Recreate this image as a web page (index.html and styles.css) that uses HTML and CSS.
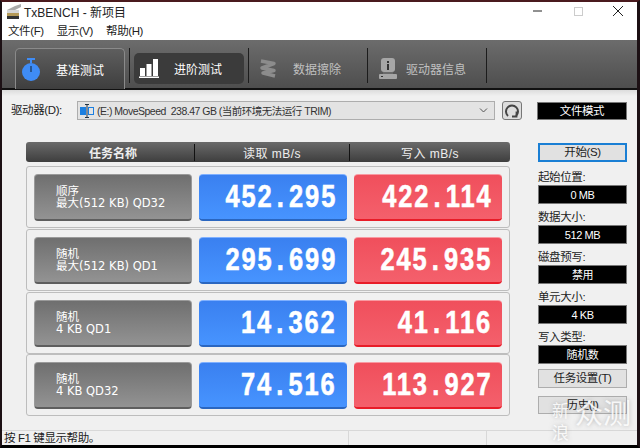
FILE: index.html
```html
<!doctype html>
<html lang="zh-CN">
<head>
    <meta charset="UTF-8">
    <title>TxBENCH</title>
    <link rel="stylesheet" href="styles.css">
</head>
<body>
<div class="window">
    <div class="titlebar">
        <svg class="app-icon" width="16" height="15" viewBox="0 0 16 15">
            <path d="M1 6 L9 2 L15 0 L15 3 L9 6 Z" fill="#aaa"/>
            <path d="M1 6 H13 V9 H1 Z" fill="#d6d6d6"/>
            <rect x="1" y="9" width="12" height="3" fill="#b59a58"/>
            <rect x="1" y="12" width="12" height="3" fill="#333"/>
        </svg>
        <span class="title">TxBENCH - 新项目</span>
        <div class="win-btns">
            <svg width="12" height="12" viewBox="0 0 12 12"><path d="M1 6H10" stroke="#222" stroke-width="1"/></svg>
            <svg width="12" height="12" viewBox="0 0 12 12"><rect x="2.5" y="2.5" width="8" height="8" fill="none" stroke="#ccc"/></svg>
            <svg width="12" height="12" viewBox="0 0 12 12"><path d="M1 1L11 11M11 1L1 11" stroke="#222" stroke-width="1"/></svg>
        </div>
    </div>
    <div class="menubar">
        <span>文件(F)</span><span>显示(V)</span><span>帮助(H)</span>
    </div>

    <div class="toolbar">
        <div class="tab tab-active">
            <svg width="18" height="23" viewBox="0 0 18 23">
                <rect x="5" y="0" width="8" height="2" fill="#3f8cf5"/>
                <rect x="8" y="2" width="2" height="3" fill="#3f8cf5"/>
                <circle cx="9" cy="14" r="9" fill="#3f8cf5"/>
                <path d="M9 8V14" stroke="#123" stroke-width="1"/>
            </svg>
            <span>基准测试</span>
        </div>
        <i class="sep"></i>
        <div class="tab tab-dark">
            <svg width="20" height="19" viewBox="0 0 20 19" fill="#fff">
                <rect x="1" y="9" width="5" height="8"/><rect x="7.500" y="5" width="5" height="12"/><rect x="14" y="0" width="5" height="17"/><rect y="17.500" width="20" height="1.500"/>
            </svg>
            <span>进阶测试</span>
        </div>
        <i class="sep"></i>
        <div class="tab tab-off">
            <svg width="18" height="19" viewBox="0 0 18 19" fill="none" stroke="#8c8c8c" stroke-width="3.500" stroke-linejoin="round">
                <path d="M2 2L15 4.500L3 9L15 11.500L4 14L16 17"/>
            </svg>
            <span>数据擦除</span>
        </div>
        <i class="sep"></i>
        <div class="tab tab-off tab-info">
            <svg width="18" height="21" viewBox="0 0 18 21">
                <rect x="2" y="0" width="14" height="14" rx="3" fill="#a6a6a6"/>
                <rect x="4" y="14" width="10" height="2" fill="#6a6a6a"/>
                <rect x="0" y="16" width="18" height="5" rx="1" fill="#a6a6a6"/>
                <rect x="2" y="18" width="2" height="1" fill="#333"/>
                <rect x="8" y="3" width="2" height="2" fill="#333"/>
                <rect x="8" y="6" width="2" height="6" fill="#333"/>
            </svg>
            <span>驱动器信息</span>
        </div>
        <i class="sep"></i>
    </div>

    <div class="content">
        <div class="drive-row">
            <label class="drive-label">驱动器(D):</label>
            <div class="select">
                <svg width="14" height="14" viewBox="0 0 14 14">
                    <rect x="0" y="3" width="6" height="8" fill="#1c7fe0"/><rect x="8.500" y="3.500" width="5" height="7" fill="none" stroke="#1c7fe0"/>
                    <path d="M7 0V14M5 0.500H9M5 13.500H9" stroke="#234" stroke-width="1" fill="none"/>
                </svg>
                <span class="select-text">(E:) MoveSpeed&nbsp; 238.47 GB (当前环境无法运行 TRIM)</span>
                <svg class="chevron" width="9" height="5" viewBox="0 0 9 5"><path d="M1 0.500L4.500 4L8 0.500" fill="none" stroke="#555"/></svg>
            </div>
            <div class="refresh">
                <svg width="16" height="15" viewBox="0 0 16 15" fill="none" stroke="#444" stroke-width="2">
                    <path d="M4 13A6 6 0 1 1 12 13"/><path d="M12.500 8.500V13.500H8" stroke-width="1.800"/>
                </svg>
            </div>
            <div class="mode">文件模式</div>
        </div>

        <div class="main">
            <div class="results">
                <div class="head">
                    <div class="head-name">任务名称</div>
                    <div class="head-col">读取 mB/s</div>
                    <div class="head-col last">写入 mB/s</div>
                </div>
                <div class="row">
                    <div class="name">顺序<br>最大(512 KB) QD32</div>
                    <div class="val read"><span class="num">452<b>.</b>295</span></div>
                    <div class="val write"><span class="num">422<b>.</b>114</span></div>
                </div>
                <div class="row">
                    <div class="name">随机<br>最大(512 KB) QD1</div>
                    <div class="val read"><span class="num">295<b>.</b>699</span></div>
                    <div class="val write"><span class="num">245<b>.</b>935</span></div>
                </div>
                <div class="row">
                    <div class="name">随机<br>4 KB QD1</div>
                    <div class="val read"><span class="num">14<b>.</b>362</span></div>
                    <div class="val write"><span class="num">41<b>.</b>116</span></div>
                </div>
                <div class="row">
                    <div class="name">随机<br>4 KB QD32</div>
                    <div class="val read"><span class="num">74<b>.</b>516</span></div>
                    <div class="val write"><span class="num">113<b>.</b>927</span></div>
                </div>
            </div>

            <div class="side">
                <div class="btn btn-focus">开始(S)</div>
                <div class="field"><label>起始位置:</label><div class="box">0 MB</div></div>
                <div class="field"><label>数据大小:</label><div class="box">512 MB</div></div>
                <div class="field"><label>磁盘预写:</label><div class="box">禁用</div></div>
                <div class="field"><label>单元大小:</label><div class="box">4 KB</div></div>
                <div class="field"><label>写入类型:</label><div class="box">随机数</div></div>
                <div class="btn btn-task">任务设置(T)</div>
                <div class="btn btn-hist">历史(I)</div>
            </div>
        </div>
    </div>

    <div class="statusbar">
        <div class="st-main">按 F1 键显示帮助。</div>
        <div class="st-mid"></div>
        <div class="st-end"></div>
    </div>

    <div class="watermark">
        <div class="wm-small">新<br>浪</div>
        <div class="wm-big">众测</div>
    </div>
</div>
</body>
</html>
```

FILE: styles.css
```css
*{
    box-sizing: border-box;
}
html, body{
    margin: 0;
    height: 100%;
    overflow: hidden;
}
body{
    font-family: "Liberation Sans", "Noto Sans CJK SC", sans-serif;
    font-size: 11.500px;
    letter-spacing: -0.4px;
    color: #111;
    background: #000;
}
.window{
    position: relative;
    width: 640px;
    height: 448px;
    border-top: 2px solid #4a1a1e;
    border-left: 2px solid #1c1014;
    border-right: 3px solid #1c1014;
    border-bottom: 3px solid #000;
    background: #f0f0f0;
    display: flex;
    flex-direction: column;
    overflow: hidden;
}

/* title + menu */
.titlebar{
    height: 18px;
    background: #fff;
    display: flex;
    align-items: center;
    padding-left: 4px;
}
.app-icon{
    margin-right: 2px;
}
.title{
    font-size: 12px;
    letter-spacing: 0;
    color: #222;
}
.win-btns{
    margin-left: auto;
    display: flex;
    gap: 28px;
    padding-right: 13px;
}
.menubar{
    height: 20px;
    background: #fff;
    display: flex;
    gap: 13px;
    padding: 3px 0 0 6px;
    line-height: 16px;
    color: #222;
}

/* toolbar */
.toolbar{
    height: 50px;
    background: linear-gradient(#6c6c6c, #4e4e4e);
    border-bottom: 2px solid #111;
    display: flex;
    align-items: flex-start;
    padding-left: 13px;
}
.tab{
    width: 110px;
    display: flex;
    align-items: center;
    color: #fff;
    font-size: 12px;
    letter-spacing: 0;
}
.tab-active{
    height: 41px;
    margin-top: 8px;
    border: 1px solid #8a8a8a;
    border-bottom: 0;
    border-radius: 5px 5px 0 0;
    background: linear-gradient(#5e5e5e, #3e3e3e);
    padding-left: 6px;
    gap: 16px;
}
.tab-dark{
    height: 31px;
    margin-top: 13px;
    border-radius: 5px;
    background: #3b3b3b;
    padding-left: 5px;
    gap: 15px;
}
.tab-off{
    height: 31px;
    margin-top: 13px;
    color: #c0c0c0;
    padding-left: 6px;
    gap: 16px;
}
.tab-info{
    padding-left: 7px;
    gap: 9px;
}
.sep{
    width: 1px;
    height: 35px;
    margin: 8px 4px 0;
    background: #1c1c1c;
    flex: none;
}

/* drive row */
.content{
    flex: 1;
    padding: 10px 10px 0 9px;
    background: linear-gradient(#dcdcdc, #f0f0f0 6px);
}
.drive-row{
    display: flex;
    align-items: flex-end;
    height: 20px;
}
.drive-label{
    width: 66px;
    height: 19px;
    line-height: 19px;
    color: #222;
}
.select{
    width: 418px;
    height: 19px;
    border: 1px solid #adadad;
    background: #e3e3e3;
    display: flex;
    align-items: center;
    padding: 0 6px 0 2px;
    gap: 3px;
    font-size: 10.500px;
    letter-spacing: -0.5px;
    color: #333;
}
.chevron{
    margin-left: auto;
}
.refresh{
    width: 20px;
    height: 19px;
    margin-left: 7px;
    border: 1px solid #777;
    border-radius: 3px;
    background: #ddd;
    display: flex;
    align-items: center;
    justify-content: center;
}
.mode{
    width: 90px;
    height: 18px;
    margin-left: 15px;
    background: #000;
    border: 1px solid #777;
    color: #fff;
    text-align: center;
    line-height: 16px;
}

/* results table */
.main{
    display: flex;
    margin-top: 22px;
    padding-left: 15px;
}
.results{
    width: 484px;
}
.head{
    height: 20px;
    border-radius: 3px;
    background: linear-gradient(#6a6a6a, #3e3e3e);
    display: flex;
    align-items: center;
    color: #eee;
    font-size: 12px;
    font-weight: bold;
    letter-spacing: 0;
    text-align: center;
    margin-bottom: 4px;
}
.head-name{
    width: 169px;
    padding-left: 6px;
    border-right: 1px solid #111;
}
.head-col{
    width: 155px;
    border-right: 1px solid #111;
    font-weight: normal;
    letter-spacing: 0.5px;
}
.head-col.last{
    border-right: 0;
    width: 160px;
}
.row{
    height: 62px;
    margin-bottom: 1px;
    border: 1px solid #bdbdbd;
    border-radius: 3px;
    padding: 7px;
    display: flex;
    gap: 7px;
}
.row:nth-child(4){
    margin-bottom: 0;
}
.name{
    width: 158px;
    height: 47px;
    border: 1px solid #9a9a9a;
    border-bottom: 2px solid #5e5e5e;
    border-radius: 4px;
    background: linear-gradient(#6f6f6f, #939393);
    color: #fff;
    padding: 10px 0 0 21px;
    line-height: 12px;
    font-family: "DejaVu Sans", "Noto Sans CJK SC", sans-serif;
    font-size: 11.500px;
    letter-spacing: 0;
}
.val{
    width: 148px;
    height: 47px;
    border-radius: 4px;
    color: #fff;
    font-weight: bold;
    font-size: 31px;
    letter-spacing: 2.300px;
    line-height: 44px;
    text-align: right;
    padding-right: 10px;
    -webkit-text-stroke: 0.6px #fff;
}
.num{
    display: inline-block;
    transform: scaleX(.82);
    transform-origin: right center;
}
.val b{
    margin: 0 4px;
}
.read{
    background: linear-gradient(#3a80f0, #4794ff);
    border-top: 1px solid #7fb0ff;
    border-bottom: 2px solid #2a66c0;
}
.write{
    background: linear-gradient(#f04f5c, #f4606c);
    border-top: 1px solid #f89aa2;
    border-bottom: 2px solid #e81c28;
}

/* right column */
.side{
    width: 90px;
    margin-left: 28px;
}
.btn{
    border: 1px solid #adadad;
    background: #e1e1e1;
    text-align: center;
    color: #222;
}
.btn-focus{
    height: 19px;
    border: 2px solid #1a7fd4;
    line-height: 15px;
    margin-top: 1px;
    margin-bottom: 7px;
}
.btn-task{
    height: 19px;
    line-height: 17px;
    margin-top: 2px;
}
.btn-hist{
    height: 18px;
    line-height: 16px;
    margin-top: 8px;
}
.field label{
    display: block;
    height: 16px;
    line-height: 16px;
    color: #222;
}
.box{
    height: 19px;
    background: #000;
    border: 1px solid #777;
    color: #fff;
    text-align: center;
    line-height: 18px;
    font-size: 11px;
    margin-bottom: 5px;
}

/* status */
.statusbar{
    height: 15px;
    border-top: 1px solid #d8d8d8;
    display: flex;
    line-height: 15px;
    color: #222;
}
.st-main{
    width: 346px;
    padding-left: 2px;
}
.st-mid{
    width: 139px;
    border-left: 1px solid #d8d8d8;
    border-right: 1px solid #d8d8d8;
}

/* watermark sits over the window corner */
.watermark{
    position: absolute;
    left: 550px;
    top: 399px;
    display: flex;
    color: rgba(255,255,255,.85);
    text-shadow: 0 0 4px rgba(120,120,120,.5);
    letter-spacing: 0;
    pointer-events: none;
}
.wm-small{
    font-size: 17px;
    line-height: 22px;
    width: 23px;
}
.wm-big{
    font-size: 28px;
    line-height: 28px;
}
```
